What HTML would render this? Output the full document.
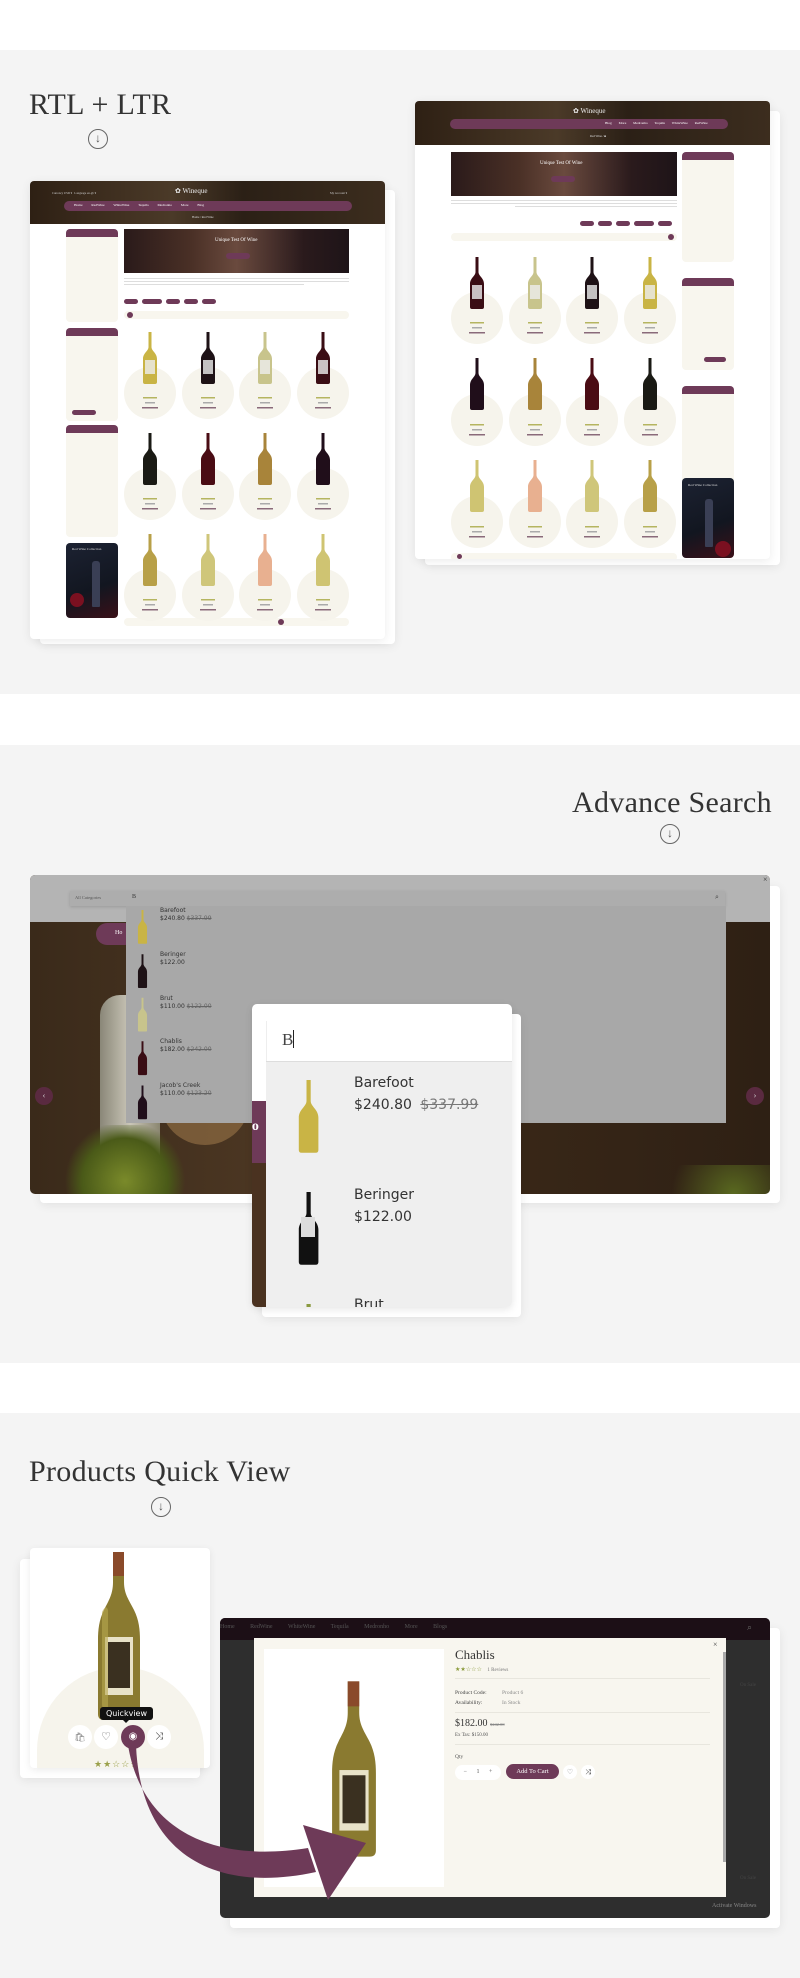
<!DOCTYPE html>
<html><head><meta charset="utf-8">
<style>
*{margin:0;padding:0;box-sizing:border-box}
body{width:800px;height:1978px;background:#fff;font-family:"Liberation Serif",serif;position:relative;overflow:hidden}
.a{position:absolute}
.gray{background:#f4f4f4}
.ttl{font-size:30px;color:#333;letter-spacing:0.3px;white-space:nowrap}
.circ{width:20px;height:20px;border:1.3px solid #666;border-radius:50%;text-align:center;font-size:12px;line-height:17px;color:#555;font-family:"Liberation Sans",sans-serif}
.card{background:#fff;box-shadow:0 2px 10px rgba(0,0,0,.08);border-radius:4px}
.hdr{background:linear-gradient(90deg,#2e2014,#4b3a28 40%,#2b2016 60%,#3c2d1e)}
.nav{background:#6e3a58;border-radius:8px}
.side{background:#f8f6ee;border-radius:4px}
.sideh{background:#6e3a58;border-radius:4px 4px 0 0;height:8px}
.ln{background:#bbb;height:1px}
.pill{background:#6e3a58;border-radius:5px;height:5px}
.t{font-size:4px;color:#888;white-space:nowrap}
</style></head><body>

<div class="a gray" style="left:0;top:50px;width:800px;height:644px"></div>
<div class="a gray" style="left:0;top:745px;width:800px;height:618px"></div>
<div class="a gray" style="left:0;top:1413px;width:800px;height:565px"></div>

<!-- ============ SECTION 1 ============ -->
<div class="a ttl" style="left:29px;top:88px">RTL + LTR</div>
<div class="a circ" style="left:88px;top:129px">↓</div>

<div class="a card" style="left:40px;top:190px;width:355px;height:454px"></div>
<div class="a card" style="left:30px;top:181px;width:355px;height:458px;overflow:hidden">
  <div class="a hdr" style="left:0;top:0;width:355px;height:43px"></div>
  <div class="a" style="left:145px;top:6px;font-size:7px;color:#eee">✿ Wineque</div>
  <div class="a t" style="left:22px;top:10px;color:#ccc;font-size:3px">Currency USD ▾ &nbsp; Language en-gb ▾</div>
  <div class="a t" style="left:300px;top:10px;color:#ccc;font-size:3px">My Account ▾</div>
  <div class="a nav" style="left:34px;top:20px;width:288px;height:10px"></div>
  <div class="a" style="left:44px;top:22px;font-size:3.5px;color:#fff;word-spacing:8px;white-space:nowrap">Home RedWine WhiteWine Tequila Medronho More Blog</div>
  <div class="a" style="left:162px;top:34px;font-size:3px;color:#ddd">Home / Red Wine</div>
  <div class="a side" style="left:36px;top:48px;width:52px;height:93px"><div class="sideh"></div></div>
  <div class="a side" style="left:36px;top:147px;width:52px;height:93px"><div class="sideh"></div></div>
  <div class="a side" style="left:36px;top:244px;width:52px;height:112px"><div class="sideh"></div></div>
  <div class="a" style="left:36px;top:362px;width:52px;height:75px;background:linear-gradient(160deg,#1c2232,#121620 60%,#3a1018);border-radius:4px"></div>
  <div class="a" style="left:42px;top:366px;font-size:3.5px;color:#ddd">Red Wine Collection</div>
  <div class="a" style="left:62px;top:380px;width:8px;height:46px;background:#3a3f55;border-radius:3px 3px 1px 1px"></div>
  <div class="a" style="left:40px;top:412px;width:14px;height:14px;background:#7a1020;border-radius:50%"></div>
  <div class="a pill" style="left:42px;top:229px;width:24px;height:5px"></div>
  <div class="a" style="left:94px;top:48px;width:225px;height:44px;background:linear-gradient(90deg,#2a1a1a,#4a3026 30%,#6a4a3e 50%,#2a1a1c 80%,#1e1418)"></div>
  <div class="a" style="left:185px;top:57px;font-size:5px;color:#fff">Unique Test Of Wine</div>
  <div class="a pill" style="left:196px;top:72px;width:24px;height:6px"></div>
  <div class="a ln" style="left:94px;top:97px;width:225px;background:#ddd"></div>
  <div class="a ln" style="left:94px;top:100px;width:225px;background:#ddd"></div>
  <div class="a ln" style="left:94px;top:103px;width:180px;background:#ddd"></div>
  <div class="a pill" style="left:94px;top:118px;width:14px"></div><div class="a pill" style="left:112px;top:118px;width:20px"></div><div class="a pill" style="left:136px;top:118px;width:14px"></div><div class="a pill" style="left:154px;top:118px;width:14px"></div><div class="a pill" style="left:172px;top:118px;width:14px"></div>
  <div class="a" style="left:94px;top:130px;width:225px;height:8px;background:#f8f6ee;border-radius:4px"></div>
  <div class="a" style="left:97px;top:131px;width:6px;height:6px;background:#6e3a58;border-radius:50%"></div>
  <div class="a" style="left:94px;top:437px;width:225px;height:8px;background:#f8f6ee;border-radius:4px"></div>
  <div class="a" style="left:248px;top:438px;width:6px;height:6px;background:#6e3a58;border-radius:50%"></div>
</div>

<div class="a card" style="left:425px;top:111px;width:355px;height:454px"></div>
<div class="a card" style="left:415px;top:101px;width:355px;height:458px;overflow:hidden">
  <div class="a hdr" style="left:0;top:0;width:355px;height:44px"></div>
  <div class="a" style="left:158px;top:6px;font-size:7px;color:#eee">✿ Wineque</div>
  <div class="a nav" style="left:35px;top:18px;width:278px;height:10px"></div>
  <div class="a" style="left:190px;top:20px;font-size:3.5px;color:#fff;word-spacing:6px;white-space:nowrap">Blog More Medronho Tequila WhiteWine RedWine</div>
  <div class="a" style="left:175px;top:33px;font-size:3px;color:#ddd">Red Wine / ■</div>
  <div class="a side" style="left:267px;top:51px;width:52px;height:110px"><div class="sideh"></div></div>
  <div class="a side" style="left:267px;top:177px;width:52px;height:92px"><div class="sideh"></div></div>
  <div class="a pill" style="left:289px;top:256px;width:22px"></div>
  <div class="a side" style="left:267px;top:285px;width:52px;height:110px"><div class="sideh"></div></div>
  <div class="a" style="left:267px;top:377px;width:52px;height:80px;background:linear-gradient(160deg,#1c2232,#121620 60%,#3a1018);border-radius:4px"></div>
  <div class="a" style="left:273px;top:382px;font-size:3.5px;color:#ddd">Red Wine Collection</div>
  <div class="a" style="left:290px;top:398px;width:8px;height:48px;background:#3a3f55;border-radius:3px 3px 1px 1px"></div>
  <div class="a" style="left:300px;top:440px;width:16px;height:16px;background:#7a1020;border-radius:50%"></div>
  <div class="a" style="left:36px;top:51px;width:226px;height:44px;background:linear-gradient(90deg,#2a1a1a,#4a3026 30%,#6a4a3e 50%,#2a1a1c 80%,#1e1418)"></div>
  <div class="a" style="left:125px;top:60px;font-size:5px;color:#fff">Unique Test Of Wine</div>
  <div class="a pill" style="left:136px;top:75px;width:24px;height:6px"></div>
  <div class="a ln" style="left:36px;top:99px;width:226px;background:#ddd"></div>
  <div class="a ln" style="left:36px;top:102px;width:226px;background:#ddd"></div>
  <div class="a ln" style="left:100px;top:105px;width:162px;background:#ddd"></div>
  <div class="a pill" style="left:165px;top:120px;width:14px"></div><div class="a pill" style="left:183px;top:120px;width:14px"></div><div class="a pill" style="left:201px;top:120px;width:14px"></div><div class="a pill" style="left:219px;top:120px;width:20px"></div><div class="a pill" style="left:243px;top:120px;width:14px"></div>
  <div class="a" style="left:36px;top:132px;width:226px;height:8px;background:#f8f6ee;border-radius:4px"></div>
  <div class="a" style="left:253px;top:133px;width:6px;height:6px;background:#6e3a58;border-radius:50%"></div>
  <div class="a" style="left:36px;top:452px;width:226px;height:8px;background:#f8f6ee;border-radius:4px"></div>
  <div class="a" style="left:42px;top:453px;width:5px;height:5px;background:#6e3a58;border-radius:50%"></div>
</div>

<svg class="a" style="left:0;top:0" width="800" height="700">
  <defs>
    <path id="bt" d="M5.5 0h3v15c0 4 5.5 6 5.5 12v23q0 2-2 2H2q-2 0-2-2V27c0-6 5.5-8 5.5-12z"/>
    <g id="tx"><rect x="-7" y="0" width="14" height="1.5" fill="#b5b560"/><rect x="-5" y="5" width="10" height="1.5" fill="#aaa"/><rect x="-8" y="10" width="16" height="1.5" fill="#8a6a7a"/></g>
  </defs>
  <g fill="#f6f4ec">
    <circle cx="150" cy="393" r="26"/><circle cx="208" cy="393" r="26"/><circle cx="265" cy="393" r="26"/><circle cx="323" cy="393" r="26"/>
    <circle cx="150" cy="494" r="26"/><circle cx="208" cy="494" r="26"/><circle cx="265" cy="494" r="26"/><circle cx="323" cy="494" r="26"/>
    <circle cx="150" cy="595" r="26"/><circle cx="208" cy="595" r="26"/><circle cx="265" cy="595" r="26"/><circle cx="323" cy="595" r="26"/>
  </g>
  <use href="#bt" x="143" y="332" fill="#c9b445"/><use href="#bt" x="201" y="332" fill="#1e1216"/><use href="#bt" x="258" y="332" fill="#c8c48c"/><use href="#bt" x="316" y="332" fill="#3a0d14"/>
  <use href="#bt" x="143" y="433" fill="#1a1a14"/><use href="#bt" x="201" y="433" fill="#4a0c14"/><use href="#bt" x="258" y="433" fill="#a8843a"/><use href="#bt" x="316" y="433" fill="#200e1a"/>
  <use href="#bt" x="143" y="534" fill="#b8a048"/><use href="#bt" x="201" y="534" fill="#cfc67a"/><use href="#bt" x="258" y="534" fill="#e8b090"/><use href="#bt" x="316" y="534" fill="#cfc472"/>
  <use href="#tx" x="150" y="397"/><use href="#tx" x="208" y="397"/><use href="#tx" x="265" y="397"/><use href="#tx" x="323" y="397"/>
  <use href="#tx" x="150" y="498"/><use href="#tx" x="208" y="498"/><use href="#tx" x="265" y="498"/><use href="#tx" x="323" y="498"/>
  <use href="#tx" x="150" y="599"/><use href="#tx" x="208" y="599"/><use href="#tx" x="265" y="599"/><use href="#tx" x="323" y="599"/>
  <g fill="#f6f4ec">
    <circle cx="477" cy="318" r="26"/><circle cx="535" cy="318" r="26"/><circle cx="592" cy="318" r="26"/><circle cx="650" cy="318" r="26"/>
    <circle cx="477" cy="420" r="26"/><circle cx="535" cy="420" r="26"/><circle cx="592" cy="420" r="26"/><circle cx="650" cy="420" r="26"/>
    <circle cx="477" cy="522" r="26"/><circle cx="535" cy="522" r="26"/><circle cx="592" cy="522" r="26"/><circle cx="650" cy="522" r="26"/>
  </g>
  <use href="#bt" x="470" y="257" fill="#3a0d14"/><use href="#bt" x="528" y="257" fill="#c8c48c"/><use href="#bt" x="585" y="257" fill="#1e1216"/><use href="#bt" x="643" y="257" fill="#c9b445"/>
  <use href="#bt" x="470" y="358" fill="#200e1a"/><use href="#bt" x="528" y="358" fill="#a8843a"/><use href="#bt" x="585" y="358" fill="#4a0c14"/><use href="#bt" x="643" y="358" fill="#1a1a14"/>
  <use href="#bt" x="470" y="460" fill="#cfc472"/><use href="#bt" x="528" y="460" fill="#e8b090"/><use href="#bt" x="585" y="460" fill="#cfc67a"/><use href="#bt" x="643" y="460" fill="#b8a048"/>
  <use href="#tx" x="477" y="322"/><use href="#tx" x="535" y="322"/><use href="#tx" x="592" y="322"/><use href="#tx" x="650" y="322"/>
  <use href="#tx" x="477" y="424"/><use href="#tx" x="535" y="424"/><use href="#tx" x="592" y="424"/><use href="#tx" x="650" y="424"/>
  <use href="#tx" x="477" y="526"/><use href="#tx" x="535" y="526"/><use href="#tx" x="592" y="526"/><use href="#tx" x="650" y="526"/>
  <g fill="#eee" opacity=".8">
    <rect x="145" y="360" width="10" height="14"/><rect x="203" y="360" width="10" height="14"/><rect x="260" y="360" width="10" height="14"/><rect x="318" y="360" width="10" height="14"/>
    <rect x="472" y="285" width="10" height="14"/><rect x="530" y="285" width="10" height="14"/><rect x="587" y="285" width="10" height="14"/><rect x="645" y="285" width="10" height="14"/>
  </g>
</svg>

<!-- ============ SECTION 2 ============ -->
<div class="a ttl" style="left:572px;top:786px">Advance Search</div>
<div class="a circ" style="left:660px;top:824px">↓</div>

<div class="a card" style="left:40px;top:886px;width:740px;height:317px"></div>
<div class="a" style="left:30px;top:875px;width:740px;height:319px;border-radius:5px;overflow:hidden;background:linear-gradient(90deg,#3a2a1a,#4b3622 30%,#3a2818 60%,#2e2014)">
  <div class="a" style="left:70px;top:120px;width:60px;height:200px;background:linear-gradient(90deg,#8a8778,#cac6b8,#8a8670);border-radius:20px 20px 0 0"></div>
  <div class="a" style="left:130px;top:190px;width:90px;height:80px;border-radius:0 0 45px 45px;background:rgba(170,130,80,.5)"></div>
  <div class="a" style="left:30px;top:250px;width:130px;height:70px;background:radial-gradient(circle at 50% 80%,#7a8a2a,#4a5a18 50%,transparent 70%)"></div>
  <div class="a" style="left:620px;top:290px;width:120px;height:30px;background:radial-gradient(circle at 70% 100%,#5a6a20,transparent 70%)"></div>
  <div class="a" style="left:0;top:0;width:740px;height:47px;background:#b4b4b4"></div>
  <div class="a" style="left:66px;top:48px;width:40px;height:22px;background:#6e3a58;border-radius:11px"></div>
  <div class="a" style="left:85px;top:55px;font-size:6px;color:#fff">Ho</div>
  <div class="a" style="left:40px;top:16px;width:655px;height:15px;background:#adadad;box-shadow:0 1px 3px rgba(0,0,0,.15)"></div>
  <div class="a" style="left:45px;top:20px;font-size:4.5px;color:#555">All Categories</div>
  <div class="a" style="left:102px;top:19px;font-size:6px;color:#333">B</div>
  <div class="a" style="left:685px;top:18px;font-size:7px;color:#444">⌕</div>
  <div class="a" style="left:96px;top:31px;width:600px;height:217px;background:#a8a8a8"></div>
  <div class="a" style="left:5px;top:212px;width:18px;height:18px;border-radius:50%;background:#5a2a40;color:#ddd;font-size:8px;text-align:center;line-height:17px">‹</div>
  <div class="a" style="left:716px;top:212px;width:18px;height:18px;border-radius:50%;background:#5a2a40;color:#ddd;font-size:8px;text-align:center;line-height:17px">›</div>
  <div class="a" style="left:733px;top:0;font-size:8px;color:#333">×</div>
</div>
<div class="a" style="left:160px;top:907px;font-family:'DejaVu Sans',sans-serif;font-size:6px;color:#333;line-height:8px">Barefoot<br>$240.80 <s style="color:#666">$337.99</s></div>
<div class="a" style="left:160px;top:951px;font-family:'DejaVu Sans',sans-serif;font-size:6px;color:#333;line-height:8px">Beringer<br>$122.00</div>
<div class="a" style="left:160px;top:995px;font-family:'DejaVu Sans',sans-serif;font-size:6px;color:#333;line-height:8px">Brut<br>$110.00 <s style="color:#666">$122.00</s></div>
<div class="a" style="left:160px;top:1038px;font-family:'DejaVu Sans',sans-serif;font-size:6px;color:#333;line-height:8px">Chablis<br>$182.00 <s style="color:#666">$242.00</s></div>
<div class="a" style="left:160px;top:1082px;font-family:'DejaVu Sans',sans-serif;font-size:6px;color:#333;line-height:8px">Jacob's Creek<br>$110.00 <s style="color:#666">$123.20</s></div>
<svg class="a" style="left:136px;top:910px" width="14" height="210">
  <g transform="scale(0.65)">
  <use href="#bt" x="3" y="0" fill="#c9b445"/><use href="#bt" x="3" y="68" fill="#1e1216"/><use href="#bt" x="3" y="135" fill="#c8c48c"/><use href="#bt" x="3" y="202" fill="#3a0d14"/><use href="#bt" x="3" y="270" fill="#200e1a"/>
  </g>
</svg>

<div class="a card" style="left:262px;top:1014px;width:259px;height:303px"></div>
<div class="a" style="left:252px;top:1004px;width:260px;height:303px;background:#fff;border-radius:5px;overflow:hidden;box-shadow:0 2px 8px rgba(0,0,0,.1)">
  <div class="a" style="left:0;top:97px;width:14px;height:62px;background:#6e3a58"></div>
  <div class="a" style="left:0;top:159px;width:14px;height:150px;background:#4a3220"></div>
  <div class="a" style="left:-4px;top:115px;font-size:14px;color:#fff;font-weight:bold">lo</div>
  <div class="a" style="left:14px;top:17px;width:246px;height:40px;background:#fff;border-left:1px solid #eee"></div>
  <div class="a" style="left:30px;top:26px;font-size:17px;color:#444">B<span style="display:inline-block;width:1px;height:18px;background:#222;vertical-align:-3px"></span></div>
  <div class="a" style="left:14px;top:57px;width:246px;height:250px;background:#efefef;border-top:1px solid #ddd"></div>
  <div class="a" style="left:102px;top:68px;font-family:'DejaVu Sans',sans-serif;font-size:14px;color:#333;line-height:22px">Barefoot<br>$240.80 <s style="color:#777;margin-left:4px">$337.99</s></div>
  <div class="a" style="left:102px;top:180px;font-family:'DejaVu Sans',sans-serif;font-size:14px;color:#333;line-height:22px">Beringer<br>$122.00</div>
  <div class="a" style="left:102px;top:290px;font-family:'DejaVu Sans',sans-serif;font-size:14px;color:#333;line-height:22px">Brut</div>
  <svg class="a" style="left:44px;top:76px" width="24" height="240">
    <g transform="scale(1.4)"><use href="#bt" x="2" y="0" fill="#c9b445"/><use href="#bt" x="2" y="80" fill="#111"/><use href="#bt" x="2" y="160" fill="#8a9a40"/></g>
    <rect x="5" y="137" width="14" height="20" fill="#ddd"/>
  </svg>
</div>

<!-- ============ SECTION 3 ============ -->
<div class="a ttl" style="left:29px;top:1455px">Products Quick View</div>
<div class="a circ" style="left:151px;top:1497px">↓</div>

<div class="a card" style="left:20px;top:1559px;width:180px;height:219px"></div>
<div class="a" style="left:30px;top:1548px;width:180px;height:220px;background:#fff;border-radius:4px;overflow:hidden;box-shadow:0 2px 8px rgba(0,0,0,.08)">
  <div class="a" style="left:7px;top:119px;width:167px;height:180px;border-radius:84px 84px 0 0;background:#f6f4ec"></div>
  <svg class="a" style="left:66px;top:4px" width="46" height="168" viewBox="0 0 46 168">
    <path d="M17 0h11v30c0 12 5 18 10 28s6 20 6 30v74q0 6-6 6H8q-6 0-6-6V88c0-10 1-20 6-30s9-16 9-28z" fill="#8a7a30"/>
    <path d="M17 0h11v24H17z" fill="#8a4a2a"/>
    <rect x="9" y="85" width="28" height="58" fill="#e8e2c8"/>
    <rect x="12" y="90" width="22" height="46" fill="#3a3020"/>
    <path d="M6 60 q4 -8 6 -2 v100 q-6 0 -6 -6z" fill="#b8a850" opacity=".6"/>
  </svg>
  <div class="a" style="left:70px;top:159px;width:53px;height:13px;background:#111;border-radius:3px;color:#fff;font-family:'DejaVu Sans',sans-serif;font-size:8px;text-align:center;line-height:13px">Quickview</div>
  <div class="a" style="left:93px;top:172px;width:0;height:0;border:3px solid transparent;border-top-color:#111"></div>
  <div class="a" style="left:38px;top:177px;width:24px;height:24px;border-radius:50%;background:#fff;text-align:center;line-height:24px;font-size:9px;color:#888">🛍</div>
  <div class="a" style="left:64px;top:177px;width:24px;height:24px;border-radius:50%;background:#fff;text-align:center;line-height:24px;font-size:11px;color:#666">♡</div>
  <div class="a" style="left:91px;top:177px;width:24px;height:24px;border-radius:50%;background:#6e3a58;text-align:center;line-height:24px;font-size:10px;color:#fff">◉</div>
  <div class="a" style="left:117px;top:177px;width:24px;height:24px;border-radius:50%;background:#fff;text-align:center;line-height:24px;font-size:10px;color:#333">⤨</div>
  <div class="a" style="left:64px;top:211px;font-size:9px;color:#9aa04a;letter-spacing:1px">★★☆☆☆</div>
</div>

<div class="a card" style="left:230px;top:1628px;width:550px;height:300px"></div>
<div class="a" style="left:220px;top:1618px;width:550px;height:300px;background:#2e2e2e;border-radius:5px;overflow:hidden">
  <div class="a" style="left:0;top:0;width:550px;height:22px;background:#1c0f16"></div>
  <div class="a" style="left:0;top:6px;font-size:6px;color:#555;word-spacing:14px;white-space:nowrap">Home RedWine WhiteWine Tequila Medronho More Blogs</div>
  <div class="a" style="left:527px;top:4px;font-size:9px;color:#666">⌕</div>
  <div class="a" style="left:34px;top:20px;width:472px;height:259px;background:#f8f6ef"></div>
  <div class="a" style="left:44px;top:31px;width:180px;height:238px;background:#fff"></div>
  <div class="a" style="left:520px;top:65px;font-size:5px;color:#444">On Sale</div>
  <div class="a" style="left:520px;top:258px;font-size:5px;color:#444">On Sale</div>
  <div class="a" style="left:492px;top:285px;font-size:6px;color:#888">Activate Windows</div>
  <div class="a" style="left:503px;top:34px;width:3px;height:210px;background:#aaa"></div>
</div>
<svg class="a" style="left:330px;top:1677px" width="48" height="184" viewBox="0 0 46 168">
  <path d="M17 0h11v30c0 12 5 18 10 28s6 20 6 30v74q0 6-6 6H8q-6 0-6-6V88c0-10 1-20 6-30s9-16 9-28z" fill="#8a7a30"/>
  <path d="M17 0h11v24H17z" fill="#8a4a2a"/>
  <rect x="9" y="85" width="28" height="58" fill="#e8e2c8"/>
  <rect x="12" y="90" width="22" height="46" fill="#3a3020"/>
</svg>
<div class="a" style="left:455px;top:1647px;font-size:13px;color:#333">Chablis</div>
<div class="a" style="left:713px;top:1640px;font-size:8px;color:#444">×</div>
<div class="a" style="left:455px;top:1666px;font-size:6px;color:#8a9a3a">★★☆☆☆ <span style="color:#777;margin-left:4px;font-size:5px">1 Reviews</span></div>
<div class="a ln" style="left:455px;top:1678px;width:255px;background:#e8e6de"></div>
<div class="a" style="left:455px;top:1688px;font-size:5.5px;color:#444;line-height:10px">Product Code:<br>Availability:</div>
<div class="a" style="left:502px;top:1688px;font-size:5.5px;color:#888;line-height:10px">Product 6<br>In Stock</div>
<div class="a ln" style="left:455px;top:1712px;width:255px;background:#e8e6de"></div>
<div class="a" style="left:455px;top:1718px;font-size:10px;color:#333">$182.00 <s style="font-size:4.5px;color:#888">$242.00</s></div>
<div class="a" style="left:455px;top:1733px;font-size:5px;color:#555">Ex Tax: $150.00</div>
<div class="a ln" style="left:455px;top:1744px;width:255px;background:#e8e6de"></div>
<div class="a" style="left:455px;top:1754px;font-size:5.5px;color:#555">Qty</div>
<div class="a" style="left:455px;top:1765px;width:46px;height:15px;background:#fff;border-radius:8px;font-size:6px;color:#555;line-height:15px;word-spacing:8px;text-align:center">− 1 +</div>
<div class="a" style="left:506px;top:1764px;width:53px;height:15px;background:#6e3a58;border-radius:8px;font-size:6.5px;color:#fff;line-height:15px;text-align:center">Add To Cart</div>
<div class="a" style="left:563px;top:1765px;width:14px;height:14px;background:#fff;border-radius:50%;font-size:7px;color:#888;line-height:14px;text-align:center">♡</div>
<div class="a" style="left:581px;top:1765px;width:14px;height:14px;background:#fff;border-radius:50%;font-size:7px;color:#333;line-height:14px;text-align:center">⤨</div>

<svg class="a" style="left:0;top:1700px" width="420" height="220">
  <path d="M128 45 C 140 120, 200 165, 308 148 L 316 172 C 210 195, 140 150, 136 45 Z" fill="#6e3a58"/>
  <polygon points="303,125 366,143 328,200" fill="#6e3a58"/>
</svg>

</body></html>
